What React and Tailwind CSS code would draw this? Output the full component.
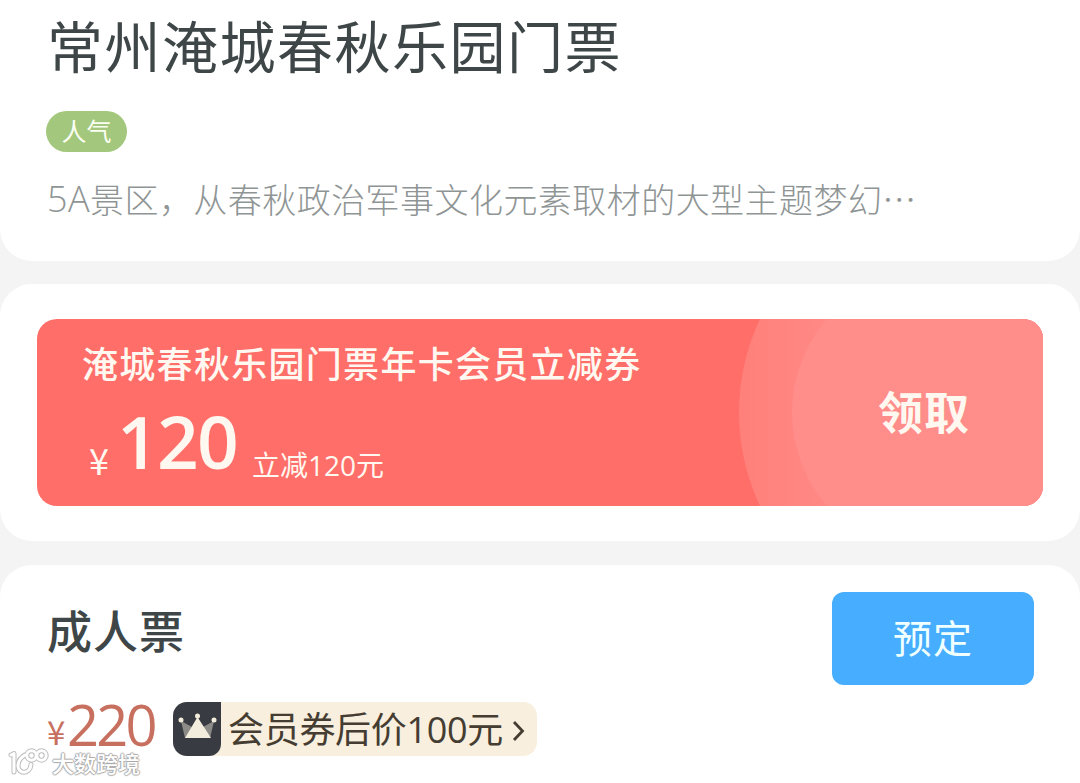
import React from 'react'

function TicketHeader({ title, tag, level, description }) {
    return (
        <div className="h-[261px] bg-white rounded-b-[32px] pl-[47px] pt-[10px]">
            <h1 className="text-[56px] leading-[68px] tracking-[1.5px] text-[#3e4648]">{title}</h1>
            <div className="-ml-px mt-[33px] w-[81px] h-[41px] rounded-full bg-[#a3c77c] flex items-center justify-center text-[25px] leading-none text-[#fafff2]">
                <span className="-mt-[3px]">{tag}</span>
            </div>
            <p className="mt-[22px] flex text-[34px] leading-[50px] tracking-[0.450px] font-light text-[#8f9595] whitespace-nowrap">
                <span className="w-[43px] text-[36px] font-['Open_Sans','Noto_Sans_CJK_SC',sans-serif]">{level}</span>
                <span>{description}</span>
            </p>
        </div>
    )
}

function Coupon({ name, amount, note }) {
    return (
        <div className="relative h-[187px] rounded-[20px] overflow-hidden bg-[#ff6e69] text-[#fff8f0] flex">
            <svg className="absolute inset-0" width="1006" height="187" viewBox="0 0 1006 187">
                <defs>
                    <linearGradient id="ring" x1="702" x2="920" y1="0" y2="0" gradientUnits="userSpaceOnUse">
                        <stop offset="0" stopColor="#ff807a" />
                        <stop offset="0.600" stopColor="#ff8d8a" />
                    </linearGradient>
                </defs>
                <circle cx="920" cy="93.5" r="218" fill="url(#ring)" />
                <circle cx="898" cy="93.5" r="143" fill="#ff8d8a" />
                <rect x="898" y="0" width="108" height="187" fill="#ff8d8a" />
            </svg>
            <div className="relative flex-1 pl-[45px] pt-[18px]">
                <h2 className="text-[36px] leading-[50px] tracking-[1.3px] font-medium whitespace-nowrap">{name}</h2>
                <div className="flex items-start font-['Open_Sans','Noto_Sans_CJK_SC',sans-serif]">
                    <span className="w-[35px] mt-[52px] pl-[7px] text-[36px] leading-[40px] font-['Noto_Sans_CJK_SC',sans-serif]">¥</span>
                    <span className="w-[135px] mt-[14px] text-[73px] leading-[80px] tracking-[-1.800px] font-semibold">{amount}</span>
                    <span className="mt-[58px] text-[28px] leading-[40px]">{note}</span>
                </div>
            </div>
            <button className="relative mr-[73px] mb-[4px] text-[45px] tracking-[1px] font-bold">领取</button>
        </div>
    )
}

function MemberPrice({ text }) {
    return (
        <div className="flex items-center w-[364px] h-[54px] rounded-[14px] bg-[#f8efde] text-[#453c32]">
            <div className="w-[48px] h-[54px] rounded-l-[14px] rounded-br-[12px] bg-[#383b42] shrink-0">
                <svg width="48" height="54" viewBox="0 0 48 54">
                    <path d="M8 19L19 25L13 36H12Z" fill="#8d8b88" />
                    <path d="M41 19L30 25L36 36H37Z" fill="#8d8b88" />
                    <path d="M24.500 15L38 36H12Z" fill="#f3eddd" />
                    <circle cx="8" cy="18" r="2.500" fill="#f3eddd" />
                    <circle cx="24.500" cy="14" r="2.500" fill="#f3eddd" />
                    <circle cx="41" cy="18" r="2.500" fill="#f3eddd" />
                </svg>
            </div>
            <span className="ml-[7px] mt-[1px] w-[275px] text-[36px] leading-[54px] tracking-[-0.3px] whitespace-nowrap font-['Open_Sans','Noto_Sans_CJK_SC',sans-serif]">{text}</span>
            <svg className="ml-[8px] mt-[3px] shrink-0" width="14" height="22" viewBox="0 0 14 22" fill="none" stroke="currentColor" strokeWidth="2.8">
                <path d="M3 2L11.500 11L3 20" />
            </svg>
        </div>
    )
}

function Watermark() {
    return (
        <div className="absolute left-[8px] top-[747px] flex items-center">
            <svg width="42" height="32" viewBox="0 0 42 32" fill="none" strokeLinecap="round" strokeLinejoin="round">
                {['#bdbdbd', '#ffffff'].map((color, i) => (
                    <g key={color} stroke={color} strokeWidth={i === 0 ? 5 : 3}>
                        <path d="M3 8L6 6.500V25" />
                        <path d="M17 8C12 11 10 15 10 19C10 27 22 28 23 17.500" />
                        <circle cx="23.500" cy="8.500" r="4.700" />
                        <circle cx="33.500" cy="8.500" r="4.700" />
                    </g>
                ))}
            </svg>
            <span className="ml-[2px] -mt-[2px] text-[22px] leading-[24px] font-medium text-white [text-shadow:1px_0_1px_#aaa,-1px_0_1px_#aaa,0_1px_1px_#aaa,0_-1px_1px_#aaa]">大数跨境</span>
        </div>
    )
}

export default function App() {
    return (
        <div lang="zh-CN" className="relative w-[1080px] h-[783px] overflow-hidden bg-[#f4f4f4] font-['Noto_Sans_CJK_SC',sans-serif]">
            <TicketHeader
                title="常州淹城春秋乐园门票"
                tag="人气"
                level="5A"
                description="景区，从春秋政治军事文化元素取材的大型主题梦幻…"
            />
            <div className="mt-[23px] h-[257px] bg-white rounded-[32px] px-[37px] pt-[35px]">
                <Coupon name="淹城春秋乐园门票年卡会员立减券" amount="120" note="立减120元" />
            </div>
            <div className="mt-[24px] h-[250px] bg-white rounded-t-[32px] pl-[47px] pr-[46px] pt-[27px]">
                <div className="flex justify-between">
                    <h2 className="text-[45px] leading-[76px] tracking-[1px] font-medium text-[#3e4648]">成人票</h2>
                    <button className="w-[202px] h-[93px] pb-[4px] rounded-[12px] bg-[#46adff] text-[#f0ffff] text-[39px] tracking-[1px]">预定</button>
                </div>
                <div className="flex mt-[17px]">
                    <div className="w-[126px] -mt-[4px] flex items-start text-[#c8705f]">
                        <span className="w-[20px] mt-[13px] text-[33px] leading-[40px]">¥</span>
                        <span className="text-[56px] leading-[52px] tracking-[-2.800px] font-['Open_Sans',sans-serif]">220</span>
                    </div>
                    <MemberPrice text="会员券后价100元" />
                </div>
            </div>
            <Watermark />
        </div>
    )
}
